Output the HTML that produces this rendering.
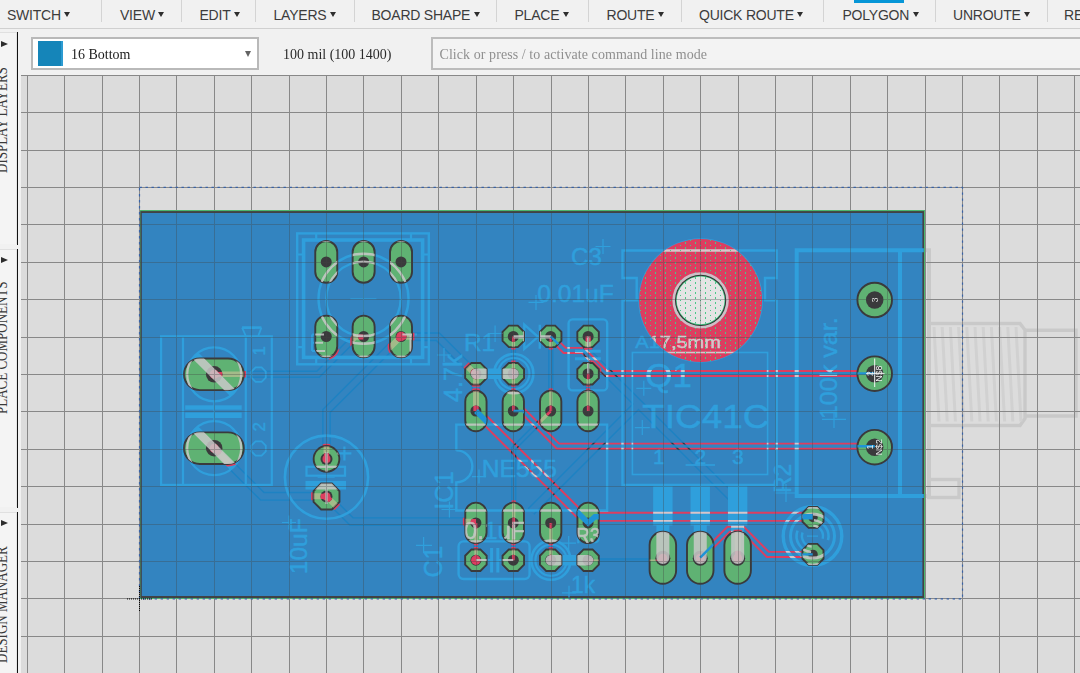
<!DOCTYPE html>
<html><head><meta charset="utf-8"><title>PCB</title>
<style>
html,body{margin:0;padding:0;}
body{width:1080px;height:673px;overflow:hidden;background:#dcdcdc;position:relative;font-family:"Liberation Sans",sans-serif;}
#menubar{position:absolute;left:0;top:0;width:1080px;height:28px;background:#f1f1f1;border-bottom:1px solid #d0d0d0;}
.mi{position:absolute;top:7px;font-size:14px;line-height:16px;color:#3c3c3c;white-space:nowrap;letter-spacing:-0.22px;}
.mi i{display:inline-block;width:0;height:0;border-left:3.6px solid transparent;border-right:3.6px solid transparent;border-top:5.4px solid #2e2e2e;margin-left:3.4px;vertical-align:2.6px;}
.sep{position:absolute;top:0;width:1px;height:22px;background:#d4d4d4;}
#toolbar{position:absolute;left:0;top:29px;width:1080px;height:46px;background:#f1f1f1;}
#sidebar{position:absolute;left:0;top:29px;width:21px;height:644px;background:#f1f1f1;overflow:hidden;}
.vline{position:absolute;left:17px;width:1.2px;background:#111;}
.vt{position:absolute;left:-7px;transform-origin:0 0;transform:rotate(-90deg) scaleY(1.3);font-family:"Liberation Serif",serif;font-size:13px;color:#3a3a3a;white-space:nowrap;line-height:13px;}
.arr{position:absolute;left:0.8px;width:0;height:0;border-top:3.6px solid transparent;border-bottom:3.6px solid transparent;border-left:7px solid #2c2c2c;}
#layerbox{position:absolute;left:31px;top:37px;width:224px;height:29px;background:#fff;border:2px solid #b9b9b9;}
#swatch{position:absolute;left:5px;top:2px;width:24.6px;height:24.6px;background:#1585b9;border-right:2px solid #2c9bd2;box-sizing:border-box;}
#layername{position:absolute;left:38px;top:6.5px;font-family:"Liberation Serif",serif;font-size:14px;line-height:17px;color:#1c1c1c;transform:scaleY(1.1);transform-origin:0 13.5px;}
#ddarr{position:absolute;left:211.5px;top:11.5px;width:0;height:0;border-left:3.8px solid transparent;border-right:3.8px solid transparent;border-top:6px solid #636363;}
#gridtxt{position:absolute;left:283px;top:45.5px;font-family:"Liberation Serif",serif;font-size:14px;line-height:17px;color:#2a2a2a;white-space:nowrap;transform:scaleY(1.1);transform-origin:0 13.5px;}
#cmd{position:absolute;left:431px;top:37px;width:660px;height:29px;background:#f3f3f3;border:2px solid #bcbcbc;}
#cmd span{position:absolute;left:6.5px;top:6.5px;font-family:"Liberation Serif",serif;font-size:14px;line-height:17px;color:#8f8f8f;white-space:nowrap;transform:scaleY(1.1);transform-origin:0 13.5px;letter-spacing:0.07px;}
#canvas{position:absolute;left:21px;top:75px;width:1059px;height:598px;background:#dcdcdc;overflow:hidden;}
svg{position:absolute;left:0;top:0;}
</style></head><body>
<div id="canvas"></div>
<svg width="1080" height="673" viewBox="0 0 1080 673">
<defs>
<clipPath id="cv"><rect x="21" y="75" width="1059" height="598"/></clipPath>
<g id="silk" fill="none" stroke="currentColor" font-family="Liberation Sans, sans-serif"><rect x="297.2" y="233.4" width="131.60000000000002" height="130.9" rx="0" stroke-width="2.4"/><rect x="303.6" y="240" width="119.0" height="117.39999999999998" rx="0" stroke-width="3.6"/><path d="M316.2 233.4V240M411 233.4V240M316.2 357.4V364.3M411 357.4V364.3M297.2 254.5H303.6M422.6 254.5H428.8M297.2 347.2H303.6M422.6 347.2H428.8" stroke-width="2.2" /><circle cx="363.5" cy="298.8" r="45" stroke-width="2.4"/><circle cx="363.5" cy="298.8" r="37.2" stroke-width="2.4"/><path d="M350.4 298.8H376.4M363.5 285.4V312" stroke-width="1" /><path d="M312 334.6V351M312 334.6H324M312 342.7H323M312 351H325" stroke-width="2" /><path d="M402.4 334.6H417M410.5 334.6V351.7" stroke-width="2" /><rect x="161.1" y="336.3" width="110.70000000000002" height="148.59999999999997" rx="0" stroke-width="2.2"/><path d="M183 336.3V484.9M245.8 336.3V484.9" stroke-width="2.2" /><path d="M242.1 327.6H261.4" stroke-width="2.6" /><path d="M242.1 327.6L245.8 336M261.4 327.6L258.2 336" stroke-width="1.8" /><circle cx="214.2" cy="374.3" r="27" stroke-width="2.2"/><path d="M195.1 355.2L233.3 393.4" stroke-width="8.4"/><path d="M255.6 367.4 L261.6 367.4 L265.8 371.6 L265.8 377.6 L261.6 381.8 L255.6 381.8 L251.4 377.6 L251.4 371.6Z" stroke-width="1.8" /><circle cx="214.2" cy="448.2" r="27" stroke-width="2.2"/><path d="M195.1 429.1L233.3 467.3" stroke-width="8.4"/><path d="M255.6 441.3 L261.6 441.3 L265.8 445.5 L265.8 451.5 L261.6 455.7 L255.6 455.7 L251.4 451.5 L251.4 445.5Z" stroke-width="1.8" /><rect x="185.2" y="405.3" width="56.5" height="4.399999999999977" fill="currentColor" stroke="none"/><rect x="185.2" y="412.5" width="56.5" height="5.5" fill="currentColor" stroke="none"/><path d="M214.2 401.3V421.2" stroke-width="1.6" /><text x="0" y="0" font-size="17" text-anchor="start" fill="currentColor" stroke="currentColor" stroke-width="0.5" transform="translate(264.5 355.5) rotate(-90)">1</text><text x="0" y="0" font-size="17" text-anchor="start" fill="currentColor" stroke="currentColor" stroke-width="0.5" transform="translate(264.5 431.5) rotate(-90)">2</text><circle cx="326.5" cy="477.2" r="41.6" stroke-width="2.6"/><rect x="306.5" y="466.8" width="38.5" height="8.899999999999977" rx="0" stroke-width="2.2"/><rect x="305.5" y="480.9" width="40.5" height="8.600000000000023" fill="currentColor" stroke="none"/><path d="M326.5 452V472.7M326.5 483V504" stroke-width="2.2" /><path d="M317.6 477.2H334.7" stroke-width="1" /><path d="M337.4 453.4H351.4M344.4 446.4V460.4" stroke-width="2.2" /><text x="0" y="0" font-size="24" text-anchor="start" fill="currentColor" stroke="currentColor" stroke-width="0.5" transform="translate(306.5 574) rotate(-90) scale(1.0165 1)">10uF</text><path d="M282 522.5H296M289 515.5V529.5" stroke-width="1.2" /><path d="M456.3 450.4V424.6H607.1V510.5H456.3V482.4A16 16 0 0 0 456.3 450.4" stroke-width="2.4" /><text x="0" y="0" font-size="23.3" text-anchor="start" fill="currentColor" stroke="currentColor" stroke-width="0.5" transform="translate(481.8 476.6) scale(1.0556 1)">NE555</text><text x="0" y="0" font-size="25" text-anchor="start" fill="currentColor" stroke="currentColor" stroke-width="0.5" transform="translate(452.8 509.5) rotate(-90) scale(0.9845 1)">IC1</text><path d="M472 476.6H486M479 469.6V483.6" stroke-width="1.2" /><path d="M441.5 509.5H457.5M449.4 501.5V517.5" stroke-width="1.2" /><circle cx="513.8" cy="373.6" r="19.6" stroke-width="2.6"/><circle cx="513.8" cy="373.6" r="15.6" stroke-width="2.2"/><path d="M476 373.7H513.6" stroke-width="10.4" stroke-linecap="round"/><text x="0" y="0" font-size="23" text-anchor="start" fill="currentColor" stroke="currentColor" stroke-width="0.5" transform="translate(463.9 350.9) scale(1.0612 1)">R1</text><text x="0" y="0" font-size="25" text-anchor="start" fill="currentColor" stroke="currentColor" stroke-width="0.5" transform="translate(462 402) rotate(-90) scale(1.0053 1)">4.7k</text><path d="M487.7 333.5H502.5M495.1 325.6V342" stroke-width="1.2" /><path d="M437 355H451M444 348V362" stroke-width="1.2" /><path d="M513.4 336.8H524.3M551 336.8H539.8" stroke-width="3.2"/><path d="M524.3 324.7V348.8L538 336.8ZM539.8 324.7V348.8" stroke-width="2.4" /><rect x="568.6" y="319.4" width="38.60000000000002" height="71.0" rx="4" stroke-width="2.4"/><path d="M575 351.2H600.8M575 358.7H600.8" stroke-width="3" /><path d="M588.2 336.5V351.2M588.2 358.7V373.5" stroke-width="2.2" /><text x="0" y="0" font-size="23.3" text-anchor="start" fill="currentColor" stroke="currentColor" stroke-width="0.5" transform="translate(571.1 265.3) scale(1.0308 1)">C3</text><text x="0" y="0" font-size="23.3" text-anchor="start" fill="currentColor" stroke="currentColor" stroke-width="0.5" transform="translate(537.3 302.4) scale(1.0547 1)">0.01uF</text><path d="M595.5 246.5H610.5M603 239V254" stroke-width="1.2" /><path d="M528.5 302.4H543.5M536 295V310" stroke-width="1.2" /><rect x="458.6" y="541.4" width="71.0" height="37.60000000000002" rx="5" stroke-width="2.4"/><path d="M491.6 548V572.6M497.8 548V572.6" stroke-width="3" /><path d="M476 560H491.6M497.8 560H513.4" stroke-width="2" /><text x="0" y="0" font-size="26" text-anchor="start" fill="currentColor" stroke="currentColor" stroke-width="0.5" transform="translate(442 577.4) rotate(-90) scale(0.9478 1)">C1</text><text x="0" y="0" font-size="24" text-anchor="start" fill="currentColor" stroke="currentColor" stroke-width="0.5" transform="translate(463.7 538.9) scale(1.0103 1)">0.1uF</text><path d="M416 545.4H432M423.6 537V553" stroke-width="1.2" /><circle cx="551" cy="560.2" r="19.6" stroke-width="2.6"/><circle cx="551" cy="560.2" r="15.6" stroke-width="2.2"/><path d="M550.8 560.2H588.2" stroke-width="10.4" stroke-linecap="round"/><text x="0" y="0" font-size="21.5" text-anchor="start" fill="currentColor" stroke="currentColor" stroke-width="0.5" transform="translate(576.1 543.1) scale(0.8769 1)">R3</text><text x="0" y="0" font-size="23" text-anchor="start" fill="currentColor" stroke="currentColor" stroke-width="0.5" transform="translate(571 592.8) scale(0.9881 1)">1k</text><path d="M562 592.8H576M569 585.8V599" stroke-width="1.2" /><path d="M561.5 543.1H576M568.7 536V550.5" stroke-width="1.2" /><path d="M622.5 485V300.4H636.7V278H622.5V250.5H776.7V278H765V300.4H776.7V485Z" stroke-width="2.4" /><rect x="632.4" y="352.5" width="135.20000000000005" height="122.0" rx="0" stroke-width="1.6"/><text x="0" y="0" font-size="33.5" text-anchor="start" fill="currentColor" stroke="currentColor" stroke-width="0.5" transform="translate(645.3 387) scale(1.0406 1)">Q1</text><text x="0" y="0" font-size="33.8" text-anchor="start" fill="currentColor" stroke="currentColor" stroke-width="0.5" transform="translate(642.3 427.7) scale(1.0906 1)">TIC41C</text><text x="0" y="0" font-size="21" text-anchor="middle" fill="currentColor" stroke="currentColor" stroke-width="0.5" transform="translate(658.8 463.7)">1</text><text x="0" y="0" font-size="21" text-anchor="middle" fill="currentColor" stroke="currentColor" stroke-width="0.5" transform="translate(700.4 463.7)">2</text><text x="0" y="0" font-size="21" text-anchor="middle" fill="currentColor" stroke="currentColor" stroke-width="0.5" transform="translate(737.8 463.7)">3</text><path d="M685.6 465H715" stroke-width="1.6" /><text x="0" y="0" font-size="17" text-anchor="start" fill="currentColor" stroke="currentColor" stroke-width="0.5" transform="translate(635.3 348) scale(1.1781 1)">A17,5mm</text><path d="M636.3 388.3H651.3M643.8 380.8V395.8" stroke-width="1.2" /><path d="M634.8 427.6H649.8M642.3 420V435" stroke-width="1.2" /><rect x="653.16" y="485" width="19.40000000000009" height="40.5" fill="currentColor" stroke="none"/><path d="M662.86 525V557.5" stroke-width="13" stroke-linecap="round"/><rect x="690.55" y="485" width="19.40000000000009" height="40.5" fill="currentColor" stroke="none"/><path d="M700.25 525V557.5" stroke-width="13" stroke-linecap="round"/><rect x="727.9399999999999" y="485" width="19.40000000000009" height="40.5" fill="currentColor" stroke="none"/><path d="M737.64 525V557.5" stroke-width="13" stroke-linecap="round"/><path d="M930 250.3H796.7V496H930" stroke-width="4" /><path d="M900 250.3V496" stroke-width="4" /><text x="0" y="0" font-size="24.5" text-anchor="start" fill="currentColor" stroke="currentColor" stroke-width="0.5" transform="translate(837 419.3) rotate(-90) scale(1.0260 1)">100k var.</text><text x="0" y="0" font-size="24" text-anchor="start" fill="currentColor" stroke="currentColor" stroke-width="0.5" transform="translate(791.2 493) rotate(-90) scale(0.9551 1)">R2</text><path d="M822 419.3H846M834 410V428" stroke-width="1.2" /><path d="M775 493H797M786 484V502" stroke-width="1.2" /><circle cx="812.5" cy="536.1" r="29.3" stroke-width="3.4"/><circle cx="812.5" cy="536.1" r="22" stroke-width="3"/><path d="M811.1 552.0A16 16 0 0 1 797.5 530.6M813.9 520.2A16 16 0 0 1 828.0 540.2" stroke-width="2.6" /><path d="M811.6 546.6A10.5 10.5 0 0 1 802.6 532.5M813.4 525.6A10.5 10.5 0 0 1 822.6 538.8" stroke-width="2.4" /><path d="M807 536.1H818" stroke-width="1.2" /></g>
<clipPath id="boardclip"><rect x="140.9" y="212.0" width="782.9" height="385.6"/></clipPath>
<pattern id="dots" width="10" height="5" patternUnits="userSpaceOnUse"><rect x="5" y="2" width="1" height="2" fill="#45c98a"/><rect x="0" y="0" width="1" height="1" fill="#45c98a"/></pattern>
<mask id="redmask" maskUnits="userSpaceOnUse" x="0" y="0" width="1080" height="673"><path d="M476 411L588.2 522.9L594.9 516.8H813" stroke="#fff" stroke-width="10.10" fill="none" stroke-linejoin="miter" /><path d="M513.4 411H523L557.9 446.2H874.8" stroke="#fff" stroke-width="7.10" fill="none" stroke-linejoin="miter" /><path d="M550.6 336.4L564.6 350.4H583L606 373.5H874.8" stroke="#fff" stroke-width="7.00" fill="none" stroke-linejoin="miter" /><path d="M813 554.4H767.8L742.7 529.3H728.5L700.2 557.6" stroke="#fff" stroke-width="7.00" fill="none" stroke-linejoin="miter" /><path d="M476 411L588.2 522.9L594.9 516.8H813" stroke="#000" stroke-width="6.20" fill="none" stroke-linejoin="miter" /><path d="M513.4 411H523L557.9 446.2H874.8" stroke="#000" stroke-width="3.20" fill="none" stroke-linejoin="miter" /><path d="M550.6 336.4L564.6 350.4H583L606 373.5H874.8" stroke="#000" stroke-width="3.10" fill="none" stroke-linejoin="miter" /><path d="M813 554.4H767.8L742.7 529.3H728.5L700.2 557.6" stroke="#000" stroke-width="3.10" fill="none" stroke-linejoin="miter" /><circle cx="700.6" cy="300.4" r="61.5" fill="#fff"/></mask>
<clipPath id="padclip"><rect x="315.25" y="241.05" width="22" height="41.7" rx="11.0" ry="11.0"/><rect x="315.25" y="315.65" width="22" height="41.7" rx="11.0" ry="11.0"/><rect x="352.64" y="241.05" width="22" height="41.7" rx="11.0" ry="11.0"/><rect x="352.64" y="315.65" width="22" height="41.7" rx="11.0" ry="11.0"/><rect x="390.03" y="241.05" width="22" height="41.7" rx="11.0" ry="11.0"/><rect x="390.03" y="315.65" width="22" height="41.7" rx="11.0" ry="11.0"/><rect x="184.05" y="358.45" width="59.7" height="31.7" rx="15.85" ry="15.85"/><rect x="184.05" y="432.35" width="59.7" height="31.7" rx="15.85" ry="15.85"/><circle cx="326.5" cy="458.9" r="12.85"/><polygon points="321.14,483.55 331.86,483.55 339.45,491.14 339.45,501.86 331.86,509.45 321.14,509.45 313.55,501.86 313.55,491.14"/><rect x="465.26" y="390.75" width="21.3" height="40.5" rx="10.65" ry="10.65"/><rect x="465.26" y="502.65" width="21.3" height="40.5" rx="10.65" ry="10.65"/><rect x="502.65" y="390.75" width="21.3" height="40.5" rx="10.65" ry="10.65"/><rect x="502.65" y="502.65" width="21.3" height="40.5" rx="10.65" ry="10.65"/><rect x="540.04" y="390.75" width="21.3" height="40.5" rx="10.65" ry="10.65"/><rect x="540.04" y="502.65" width="21.3" height="40.5" rx="10.65" ry="10.65"/><rect x="577.43" y="390.75" width="21.3" height="40.5" rx="10.65" ry="10.65"/><rect x="577.43" y="502.65" width="21.3" height="40.5" rx="10.65" ry="10.65"/><polygon points="471.46,362.95 480.36,362.95 486.66,369.25 486.66,378.15 480.36,384.45 471.46,384.45 465.16,378.15 465.16,369.25"/><polygon points="508.85,362.95 517.75,362.95 524.05,369.25 524.05,378.15 517.75,384.45 508.85,384.45 502.55,378.15 502.55,369.25"/><polygon points="508.85,325.65 517.75,325.65 524.05,331.95 524.05,340.85 517.75,347.15 508.85,347.15 502.55,340.85 502.55,331.95"/><polygon points="546.24,325.65 555.14,325.65 561.44,331.95 561.44,340.85 555.14,347.15 546.24,347.15 539.94,340.85 539.94,331.95"/><polygon points="583.63,325.65 592.53,325.65 598.83,331.95 598.83,340.85 592.53,347.15 583.63,347.15 577.33,340.85 577.33,331.95"/><polygon points="583.63,362.95 592.53,362.95 598.83,369.25 598.83,378.15 592.53,384.45 583.63,384.45 577.33,378.15 577.33,369.25"/><polygon points="471.46,549.45 480.36,549.45 486.66,555.75 486.66,564.65 480.36,570.95 471.46,570.95 465.16,564.65 465.16,555.75"/><polygon points="508.85,549.45 517.75,549.45 524.05,555.75 524.05,564.65 517.75,570.95 508.85,570.95 502.55,564.65 502.55,555.75"/><polygon points="546.24,549.45 555.14,549.45 561.44,555.75 561.44,564.65 555.14,570.95 546.24,570.95 539.94,564.65 539.94,555.75"/><polygon points="583.63,549.45 592.53,549.45 598.83,555.75 598.83,564.65 592.53,570.95 583.63,570.95 577.33,564.65 577.33,555.75"/><rect x="649.61" y="531.80" width="26.5" height="52" rx="13.25" ry="13.25"/><rect x="687.00" y="531.80" width="26.5" height="52" rx="13.25" ry="13.25"/><rect x="724.39" y="531.80" width="26.5" height="52" rx="13.25" ry="13.25"/><circle cx="874.7" cy="300" r="17.3"/><circle cx="874.7" cy="373.7" r="17.3"/><circle cx="874.7" cy="447.2" r="17.3"/><polygon points="808.65,506.90 817.35,506.90 823.50,513.05 823.50,521.75 817.35,527.90 808.65,527.90 802.50,521.75 802.50,513.05"/><polygon points="808.65,543.90 817.35,543.90 823.50,550.05 823.50,558.75 817.35,564.90 808.65,564.90 802.50,558.75 802.50,550.05"/></clipPath>
<clipPath id="padbig"><rect x="312.85" y="238.65" width="26.8" height="46.5" rx="13.4" ry="13.4"/><rect x="312.85" y="313.25" width="26.8" height="46.5" rx="13.4" ry="13.4"/><rect x="350.24" y="238.65" width="26.8" height="46.5" rx="13.4" ry="13.4"/><rect x="350.24" y="313.25" width="26.8" height="46.5" rx="13.4" ry="13.4"/><rect x="387.63" y="238.65" width="26.8" height="46.5" rx="13.4" ry="13.4"/><rect x="387.63" y="313.25" width="26.8" height="46.5" rx="13.4" ry="13.4"/><rect x="181.65" y="356.05" width="64.5" height="36.5" rx="18.25" ry="18.25"/><rect x="181.65" y="429.95" width="64.5" height="36.5" rx="18.25" ry="18.25"/><circle cx="326.5" cy="458.9" r="15.25"/><polygon points="320.14,481.15 332.86,481.15 341.85,490.14 341.85,502.86 332.86,511.85 320.14,511.85 311.15,502.86 311.15,490.14"/><rect x="462.86" y="388.35" width="26.1" height="45.3" rx="13.05" ry="13.05"/><rect x="462.86" y="500.25" width="26.1" height="45.3" rx="13.05" ry="13.05"/><rect x="500.25" y="388.35" width="26.1" height="45.3" rx="13.05" ry="13.05"/><rect x="500.25" y="500.25" width="26.1" height="45.3" rx="13.05" ry="13.05"/><rect x="537.64" y="388.35" width="26.1" height="45.3" rx="13.05" ry="13.05"/><rect x="537.64" y="500.25" width="26.1" height="45.3" rx="13.05" ry="13.05"/><rect x="575.03" y="388.35" width="26.1" height="45.3" rx="13.05" ry="13.05"/><rect x="575.03" y="500.25" width="26.1" height="45.3" rx="13.05" ry="13.05"/><polygon points="470.46,360.55 481.36,360.55 489.06,368.25 489.06,379.15 481.36,386.85 470.46,386.85 462.76,379.15 462.76,368.25"/><polygon points="507.85,360.55 518.75,360.55 526.45,368.25 526.45,379.15 518.75,386.85 507.85,386.85 500.15,379.15 500.15,368.25"/><polygon points="507.85,323.25 518.75,323.25 526.45,330.95 526.45,341.85 518.75,349.55 507.85,349.55 500.15,341.85 500.15,330.95"/><polygon points="545.24,323.25 556.14,323.25 563.84,330.95 563.84,341.85 556.14,349.55 545.24,349.55 537.54,341.85 537.54,330.95"/><polygon points="582.63,323.25 593.53,323.25 601.23,330.95 601.23,341.85 593.53,349.55 582.63,349.55 574.93,341.85 574.93,330.95"/><polygon points="582.63,360.55 593.53,360.55 601.23,368.25 601.23,379.15 593.53,386.85 582.63,386.85 574.93,379.15 574.93,368.25"/><polygon points="470.46,547.05 481.36,547.05 489.06,554.75 489.06,565.65 481.36,573.35 470.46,573.35 462.76,565.65 462.76,554.75"/><polygon points="507.85,547.05 518.75,547.05 526.45,554.75 526.45,565.65 518.75,573.35 507.85,573.35 500.15,565.65 500.15,554.75"/><polygon points="545.24,547.05 556.14,547.05 563.84,554.75 563.84,565.65 556.14,573.35 545.24,573.35 537.54,565.65 537.54,554.75"/><polygon points="582.63,547.05 593.53,547.05 601.23,554.75 601.23,565.65 593.53,573.35 582.63,573.35 574.93,565.65 574.93,554.75"/><rect x="647.21" y="529.40" width="31.3" height="56.8" rx="15.65" ry="15.65"/><rect x="684.60" y="529.40" width="31.3" height="56.8" rx="15.65" ry="15.65"/><rect x="721.99" y="529.40" width="31.3" height="56.8" rx="15.65" ry="15.65"/><circle cx="874.7" cy="300" r="19.7"/><circle cx="874.7" cy="373.7" r="19.7"/><circle cx="874.7" cy="447.2" r="19.7"/><polygon points="807.66,504.50 818.34,504.50 825.90,512.06 825.90,522.74 818.34,530.30 807.66,530.30 800.10,522.74 800.10,512.06"/><polygon points="807.66,541.50 818.34,541.50 825.90,549.06 825.90,559.74 818.34,567.30 807.66,567.30 800.10,559.74 800.10,549.06"/></clipPath>
<clipPath id="holeclip"><circle cx="326.25" cy="261.90000000000003" r="5.5"/><circle cx="326.25" cy="336.5" r="5.5"/><circle cx="363.64" cy="261.90000000000003" r="5.5"/><circle cx="363.64" cy="336.5" r="5.5"/><circle cx="401.03" cy="261.90000000000003" r="5.5"/><circle cx="401.03" cy="336.5" r="5.5"/><circle cx="214.2" cy="374.3" r="8.25"/><circle cx="214.2" cy="448.2" r="8.25"/><circle cx="326.5" cy="458.9" r="6.0"/><circle cx="326.5" cy="496.5" r="6.0"/><circle cx="475.91" cy="411.0" r="5.5"/><circle cx="475.91" cy="522.9" r="5.5"/><circle cx="513.3" cy="411.0" r="5.5"/><circle cx="513.3" cy="522.9" r="5.5"/><circle cx="550.69" cy="411.0" r="5.5"/><circle cx="550.69" cy="522.9" r="5.5"/><circle cx="588.08" cy="411.0" r="5.5"/><circle cx="588.08" cy="522.9" r="5.5"/><circle cx="475.91" cy="373.7" r="5.5"/><circle cx="513.3" cy="373.7" r="5.5"/><circle cx="513.3" cy="336.4" r="5.5"/><circle cx="550.69" cy="336.4" r="5.5"/><circle cx="588.08" cy="336.4" r="5.5"/><circle cx="588.08" cy="373.7" r="5.5"/><circle cx="475.91" cy="560.2" r="5.5"/><circle cx="513.3" cy="560.2" r="5.5"/><circle cx="550.69" cy="560.2" r="5.5"/><circle cx="588.08" cy="560.2" r="5.5"/><circle cx="662.86" cy="558.3" r="7.5"/><circle cx="700.25" cy="558.3" r="7.5"/><circle cx="737.64" cy="558.3" r="7.5"/><circle cx="874.7" cy="300" r="8.75"/><circle cx="874.7" cy="373.7" r="8.75"/><circle cx="874.7" cy="447.2" r="8.75"/><circle cx="813" cy="517.4" r="4.75"/><circle cx="813" cy="554.4" r="4.75"/></clipPath>
<clipPath id="outb"><path clip-rule="evenodd" d="M0 0H1080V673H0ZM140 210H925V599H140Z"/></clipPath>
<clipPath id="inb"><rect x="140" y="211" width="784.4" height="387"/></clipPath>
</defs>
<g clip-path="url(#cv)">
<g id="outsilk" fill="none" stroke="#c9c9c9" stroke-width="3.4"><path d="M920 250.3H929V496H920" stroke-width="4"/><path d="M930 323.5H1020L1025 330V418.5L1020 425.5H930"/><path d="M1025 330.3H1076V416H1025"/><path d="M927 479.5H959V497.5H927" /><path d="M934.0 327L939.0 421.5M942.2 327L947.2 421.5M950.4 327L955.4 421.5M958.6 327L963.6 421.5M966.8 327L971.8 421.5M975.0 327L980.0 421.5M983.2 327L988.2 421.5M991.4 327L996.4 421.5M999.6 327L1004.6 421.5M1007.8 327L1012.8 421.5M1016.0 327L1021.0 421.5" stroke-width="3" stroke="#d1d1d1"/></g>
<rect x="139.6" y="210" width="785.4" height="389" fill="#4cb56e"/>
<rect x="140.4" y="211.1" width="783.6" height="386.9" fill="#414244"/>
<rect x="141.8" y="213" width="780.6" height="383" fill="#3384c0"/>
<path d="M476 411L588.2 522.9L594.9 516.8H813" stroke="#dc3e60" stroke-width="10.10" fill="none" stroke-linejoin="miter" /><path d="M513.4 411H523L557.9 446.2H874.8" stroke="#dc3e60" stroke-width="7.10" fill="none" stroke-linejoin="miter" /><path d="M550.6 336.4L564.6 350.4H583L606 373.5H874.8" stroke="#dc3e60" stroke-width="7.00" fill="none" stroke-linejoin="miter" /><path d="M813 554.4H767.8L742.7 529.3H728.5L700.2 557.6" stroke="#dc3e60" stroke-width="7.00" fill="none" stroke-linejoin="miter" />
<path d="M476 411L588.2 522.9L594.9 516.8H813" stroke="#3185c3" stroke-width="6.20" fill="none" stroke-linejoin="miter" /><path d="M513.4 411H523L557.9 446.2H874.8" stroke="#3185c3" stroke-width="3.20" fill="none" stroke-linejoin="miter" /><path d="M550.6 336.4L564.6 350.4H583L606 373.5H874.8" stroke="#3185c3" stroke-width="3.10" fill="none" stroke-linejoin="miter" /><path d="M813 554.4H767.8L742.7 529.3H728.5L700.2 557.6" stroke="#3185c3" stroke-width="3.10" fill="none" stroke-linejoin="miter" />
<path d="M214.2 374.3H318L355.3 337H363.5" stroke="#1d82c3" stroke-width="7.50" fill="none" stroke-linejoin="miter" /><path d="M214.2 448.2L262.3 496.3H326.5" stroke="#1d82c3" stroke-width="9.10" fill="none" stroke-linejoin="miter" /><path d="M326.5 496.5L351.6 521.6H476" stroke="#1d82c3" stroke-width="8.90" fill="none" stroke-linejoin="miter" /><path d="M400.6 336.9L326.5 411V458.9" stroke="#1d82c3" stroke-width="8.70" fill="none" stroke-linejoin="miter" /><path d="M400.6 336.7H437.8L474.8 373.7H476V411" stroke="#1d82c3" stroke-width="8.90" fill="none" stroke-linejoin="miter" /><path d="M550.8 411L513.7 448.4V522.9" stroke="#1d82c3" stroke-width="5.40" fill="none" stroke-linejoin="miter" /><path d="M588.2 336.4V353.6L737.8 503.2V557.6" stroke="#1d82c3" stroke-width="9.40" fill="none" stroke-linejoin="miter" /><path d="M531 511.5L638.5 404" stroke="#1d82c3" stroke-width="9.40" fill="none" stroke-linejoin="miter" /><path d="M588.2 373.7V411" stroke="#1d82c3" stroke-width="5.40" fill="none" stroke-linejoin="miter" /><path d="M513.4 336.4V411" stroke="#1d82c3" stroke-width="5.40" fill="none" stroke-linejoin="miter" /><path d="M476 522.9V560.2" stroke="#1d82c3" stroke-width="5.40" fill="none" stroke-linejoin="miter" /><path d="M513.4 522.9V560.2" stroke="#1d82c3" stroke-width="5.40" fill="none" stroke-linejoin="miter" /><path d="M550.8 522.9V560.2" stroke="#1d82c3" stroke-width="5.40" fill="none" stroke-linejoin="miter" /><path d="M550.8 336.4V411" stroke="#1d82c3" stroke-width="5.40" fill="none" stroke-linejoin="miter" /><path d="M588.2 560.2H663" stroke="#1d82c3" stroke-width="3.70" fill="none" stroke-linejoin="miter" />
<path d="M214.2 374.3H318L355.3 337H363.5" stroke="#3384c0" stroke-width="4.60" fill="none" stroke-linejoin="miter" /><path d="M214.2 448.2L262.3 496.3H326.5" stroke="#3384c0" stroke-width="6.20" fill="none" stroke-linejoin="miter" /><path d="M326.5 496.5L351.6 521.6H476" stroke="#3384c0" stroke-width="6.00" fill="none" stroke-linejoin="miter" /><path d="M400.6 336.9L326.5 411V458.9" stroke="#3384c0" stroke-width="5.80" fill="none" stroke-linejoin="miter" /><path d="M400.6 336.7H437.8L474.8 373.7H476V411" stroke="#3384c0" stroke-width="6.00" fill="none" stroke-linejoin="miter" /><path d="M550.8 411L513.7 448.4V522.9" stroke="#3384c0" stroke-width="2.50" fill="none" stroke-linejoin="miter" /><path d="M588.2 336.4V353.6L737.8 503.2V557.6" stroke="#3384c0" stroke-width="6.50" fill="none" stroke-linejoin="miter" /><path d="M531 511.5L638.5 404" stroke="#3384c0" stroke-width="6.50" fill="none" stroke-linejoin="miter" /><path d="M588.2 373.7V411" stroke="#3384c0" stroke-width="2.50" fill="none" stroke-linejoin="miter" /><path d="M513.4 336.4V411" stroke="#3384c0" stroke-width="2.50" fill="none" stroke-linejoin="miter" /><path d="M476 522.9V560.2" stroke="#3384c0" stroke-width="2.50" fill="none" stroke-linejoin="miter" /><path d="M513.4 522.9V560.2" stroke="#3384c0" stroke-width="2.50" fill="none" stroke-linejoin="miter" /><path d="M550.8 522.9V560.2" stroke="#3384c0" stroke-width="2.50" fill="none" stroke-linejoin="miter" /><path d="M550.8 336.4V411" stroke="#3384c0" stroke-width="2.50" fill="none" stroke-linejoin="miter" /><path d="M588.2 560.2H663" stroke="#3384c0" stroke-width="0.80" fill="none" stroke-linejoin="miter" />
<use href="#silk" style="color:#2f9fdc" clip-path="url(#boardclip)"/>
<circle cx="700.6" cy="300.4" r="62.2" fill="#2f9fdc"/>
<circle cx="700.6" cy="300.4" r="61.5" fill="#dc3e60"/>
<g mask="url(#redmask)"><path d="M214.2 374.3H318L355.3 337H363.5" stroke="#3a3436" stroke-width="7.50" fill="none" stroke-linejoin="miter" /><path d="M214.2 448.2L262.3 496.3H326.5" stroke="#3a3436" stroke-width="9.10" fill="none" stroke-linejoin="miter" /><path d="M326.5 496.5L351.6 521.6H476" stroke="#3a3436" stroke-width="8.90" fill="none" stroke-linejoin="miter" /><path d="M400.6 336.9L326.5 411V458.9" stroke="#3a3436" stroke-width="8.70" fill="none" stroke-linejoin="miter" /><path d="M400.6 336.7H437.8L474.8 373.7H476V411" stroke="#3a3436" stroke-width="8.90" fill="none" stroke-linejoin="miter" /><path d="M550.8 411L513.7 448.4V522.9" stroke="#3a3436" stroke-width="5.40" fill="none" stroke-linejoin="miter" /><path d="M588.2 336.4V353.6L737.8 503.2V557.6" stroke="#3a3436" stroke-width="9.40" fill="none" stroke-linejoin="miter" /><path d="M531 511.5L638.5 404" stroke="#3a3436" stroke-width="9.40" fill="none" stroke-linejoin="miter" /><path d="M588.2 373.7V411" stroke="#3a3436" stroke-width="5.40" fill="none" stroke-linejoin="miter" /><path d="M513.4 336.4V411" stroke="#3a3436" stroke-width="5.40" fill="none" stroke-linejoin="miter" /><path d="M476 522.9V560.2" stroke="#3a3436" stroke-width="5.40" fill="none" stroke-linejoin="miter" /><path d="M513.4 522.9V560.2" stroke="#3a3436" stroke-width="5.40" fill="none" stroke-linejoin="miter" /><path d="M550.8 522.9V560.2" stroke="#3a3436" stroke-width="5.40" fill="none" stroke-linejoin="miter" /><path d="M550.8 336.4V411" stroke="#3a3436" stroke-width="5.40" fill="none" stroke-linejoin="miter" /><path d="M588.2 560.2H663" stroke="#3a3436" stroke-width="3.70" fill="none" stroke-linejoin="miter" /><path d="M214.2 374.3H318L355.3 337H363.5" stroke="#dc3e60" stroke-width="4.50" fill="none" stroke-linejoin="miter" /><path d="M214.2 448.2L262.3 496.3H326.5" stroke="#dc3e60" stroke-width="6.10" fill="none" stroke-linejoin="miter" /><path d="M326.5 496.5L351.6 521.6H476" stroke="#dc3e60" stroke-width="5.90" fill="none" stroke-linejoin="miter" /><path d="M400.6 336.9L326.5 411V458.9" stroke="#dc3e60" stroke-width="5.70" fill="none" stroke-linejoin="miter" /><path d="M400.6 336.7H437.8L474.8 373.7H476V411" stroke="#dc3e60" stroke-width="5.90" fill="none" stroke-linejoin="miter" /><path d="M550.8 411L513.7 448.4V522.9" stroke="#dc3e60" stroke-width="2.40" fill="none" stroke-linejoin="miter" /><path d="M588.2 336.4V353.6L737.8 503.2V557.6" stroke="#dc3e60" stroke-width="6.40" fill="none" stroke-linejoin="miter" /><path d="M531 511.5L638.5 404" stroke="#dc3e60" stroke-width="6.40" fill="none" stroke-linejoin="miter" /><path d="M588.2 373.7V411" stroke="#dc3e60" stroke-width="2.40" fill="none" stroke-linejoin="miter" /><path d="M513.4 336.4V411" stroke="#dc3e60" stroke-width="2.40" fill="none" stroke-linejoin="miter" /><path d="M476 522.9V560.2" stroke="#dc3e60" stroke-width="2.40" fill="none" stroke-linejoin="miter" /><path d="M513.4 522.9V560.2" stroke="#dc3e60" stroke-width="2.40" fill="none" stroke-linejoin="miter" /><path d="M550.8 522.9V560.2" stroke="#dc3e60" stroke-width="2.40" fill="none" stroke-linejoin="miter" /><path d="M550.8 336.4V411" stroke="#dc3e60" stroke-width="2.40" fill="none" stroke-linejoin="miter" /><path d="M588.2 560.2H663" stroke="#dc3e60" stroke-width="0.80" fill="none" stroke-linejoin="miter" /><use href="#silk" style="color:#d8c4ca"/></g>
<circle cx="700.6" cy="300.4" r="61.5" fill="url(#dots)"/>
<circle cx="700.6" cy="300.4" r="28.2" fill="#cdbfc6"/>
<circle cx="700.6" cy="300.4" r="25.6" fill="#303030"/>
<circle cx="700.6" cy="300.4" r="24.6" fill="#3fbf7d"/>
<circle cx="700.6" cy="300.4" r="23.9" fill="#e4e4e4"/>
<circle cx="700.6" cy="300.4" r="23.9" fill="url(#dots)"/>
<g clip-path="url(#padbig)"><path d="M214.2 374.3H318L355.3 337H363.5" stroke="#dc3e60" stroke-width="6.40" fill="none" stroke-linejoin="miter" /><path d="M214.2 448.2L262.3 496.3H326.5" stroke="#dc3e60" stroke-width="8.00" fill="none" stroke-linejoin="miter" /><path d="M326.5 496.5L351.6 521.6H476" stroke="#dc3e60" stroke-width="7.80" fill="none" stroke-linejoin="miter" /><path d="M400.6 336.9L326.5 411V458.9" stroke="#dc3e60" stroke-width="7.60" fill="none" stroke-linejoin="miter" /><path d="M400.6 336.7H437.8L474.8 373.7H476V411" stroke="#dc3e60" stroke-width="7.80" fill="none" stroke-linejoin="miter" /><path d="M550.8 411L513.7 448.4V522.9" stroke="#dc3e60" stroke-width="4.30" fill="none" stroke-linejoin="miter" /><path d="M588.2 336.4V353.6L737.8 503.2V557.6" stroke="#dc3e60" stroke-width="8.30" fill="none" stroke-linejoin="miter" /><path d="M588.2 373.7V411" stroke="#dc3e60" stroke-width="4.30" fill="none" stroke-linejoin="miter" /><path d="M513.4 336.4V411" stroke="#dc3e60" stroke-width="4.30" fill="none" stroke-linejoin="miter" /><path d="M476 522.9V560.2" stroke="#dc3e60" stroke-width="4.30" fill="none" stroke-linejoin="miter" /><path d="M513.4 522.9V560.2" stroke="#dc3e60" stroke-width="4.30" fill="none" stroke-linejoin="miter" /><path d="M550.8 522.9V560.2" stroke="#dc3e60" stroke-width="4.30" fill="none" stroke-linejoin="miter" /><path d="M550.8 336.4V411" stroke="#dc3e60" stroke-width="4.30" fill="none" stroke-linejoin="miter" /></g>
<g fill="#5fb273" stroke="#3a3a3c" stroke-width="1.9"><rect x="315.25" y="241.05" width="22" height="41.7" rx="11.0" ry="11.0"/><rect x="315.25" y="315.65" width="22" height="41.7" rx="11.0" ry="11.0"/><rect x="352.64" y="241.05" width="22" height="41.7" rx="11.0" ry="11.0"/><rect x="352.64" y="315.65" width="22" height="41.7" rx="11.0" ry="11.0"/><rect x="390.03" y="241.05" width="22" height="41.7" rx="11.0" ry="11.0"/><rect x="390.03" y="315.65" width="22" height="41.7" rx="11.0" ry="11.0"/><rect x="184.05" y="358.45" width="59.7" height="31.7" rx="15.85" ry="15.85"/><rect x="184.05" y="432.35" width="59.7" height="31.7" rx="15.85" ry="15.85"/><circle cx="326.5" cy="458.9" r="12.85"/><polygon points="321.14,483.55 331.86,483.55 339.45,491.14 339.45,501.86 331.86,509.45 321.14,509.45 313.55,501.86 313.55,491.14"/><rect x="465.26" y="390.75" width="21.3" height="40.5" rx="10.65" ry="10.65"/><rect x="465.26" y="502.65" width="21.3" height="40.5" rx="10.65" ry="10.65"/><rect x="502.65" y="390.75" width="21.3" height="40.5" rx="10.65" ry="10.65"/><rect x="502.65" y="502.65" width="21.3" height="40.5" rx="10.65" ry="10.65"/><rect x="540.04" y="390.75" width="21.3" height="40.5" rx="10.65" ry="10.65"/><rect x="540.04" y="502.65" width="21.3" height="40.5" rx="10.65" ry="10.65"/><rect x="577.43" y="390.75" width="21.3" height="40.5" rx="10.65" ry="10.65"/><rect x="577.43" y="502.65" width="21.3" height="40.5" rx="10.65" ry="10.65"/><polygon points="471.46,362.95 480.36,362.95 486.66,369.25 486.66,378.15 480.36,384.45 471.46,384.45 465.16,378.15 465.16,369.25"/><polygon points="508.85,362.95 517.75,362.95 524.05,369.25 524.05,378.15 517.75,384.45 508.85,384.45 502.55,378.15 502.55,369.25"/><polygon points="508.85,325.65 517.75,325.65 524.05,331.95 524.05,340.85 517.75,347.15 508.85,347.15 502.55,340.85 502.55,331.95"/><polygon points="546.24,325.65 555.14,325.65 561.44,331.95 561.44,340.85 555.14,347.15 546.24,347.15 539.94,340.85 539.94,331.95"/><polygon points="583.63,325.65 592.53,325.65 598.83,331.95 598.83,340.85 592.53,347.15 583.63,347.15 577.33,340.85 577.33,331.95"/><polygon points="583.63,362.95 592.53,362.95 598.83,369.25 598.83,378.15 592.53,384.45 583.63,384.45 577.33,378.15 577.33,369.25"/><polygon points="471.46,549.45 480.36,549.45 486.66,555.75 486.66,564.65 480.36,570.95 471.46,570.95 465.16,564.65 465.16,555.75"/><polygon points="508.85,549.45 517.75,549.45 524.05,555.75 524.05,564.65 517.75,570.95 508.85,570.95 502.55,564.65 502.55,555.75"/><polygon points="546.24,549.45 555.14,549.45 561.44,555.75 561.44,564.65 555.14,570.95 546.24,570.95 539.94,564.65 539.94,555.75"/><polygon points="583.63,549.45 592.53,549.45 598.83,555.75 598.83,564.65 592.53,570.95 583.63,570.95 577.33,564.65 577.33,555.75"/><rect x="649.61" y="531.80" width="26.5" height="52" rx="13.25" ry="13.25"/><rect x="687.00" y="531.80" width="26.5" height="52" rx="13.25" ry="13.25"/><rect x="724.39" y="531.80" width="26.5" height="52" rx="13.25" ry="13.25"/><circle cx="874.7" cy="300" r="17.3"/><circle cx="874.7" cy="373.7" r="17.3"/><circle cx="874.7" cy="447.2" r="17.3"/><polygon points="808.65,506.90 817.35,506.90 823.50,513.05 823.50,521.75 817.35,527.90 808.65,527.90 802.50,521.75 802.50,513.05"/><polygon points="808.65,543.90 817.35,543.90 823.50,550.05 823.50,558.75 817.35,564.90 808.65,564.90 802.50,558.75 802.50,550.05"/></g>
<g clip-path="url(#padclip)"><path d="M214.2 374.3H318L355.3 337H363.5" stroke="rgba(255,200,170,0.42)" stroke-width="5.40" fill="none"/><path d="M214.2 448.2L262.3 496.3H326.5" stroke="rgba(255,200,170,0.42)" stroke-width="5.90" fill="none"/><path d="M326.5 496.5L351.6 521.6H476" stroke="rgba(255,200,170,0.42)" stroke-width="5.90" fill="none"/><path d="M400.6 336.9L326.5 411V458.9" stroke="rgba(255,200,170,0.42)" stroke-width="5.90" fill="none"/><path d="M400.6 336.7H437.8L474.8 373.7H476V411" stroke="rgba(255,200,170,0.42)" stroke-width="5.90" fill="none"/><path d="M550.8 411L513.7 448.4V522.9" stroke="rgba(255,200,170,0.42)" stroke-width="3.30" fill="none"/><path d="M588.2 336.4V353.6L737.8 503.2V557.6" stroke="rgba(255,200,170,0.42)" stroke-width="5.90" fill="none"/><path d="M531 511.5L638.5 404" stroke="rgba(255,200,170,0.42)" stroke-width="5.90" fill="none"/><path d="M588.2 373.7V411" stroke="rgba(255,200,170,0.42)" stroke-width="3.30" fill="none"/><path d="M513.4 336.4V411" stroke="rgba(255,200,170,0.42)" stroke-width="3.30" fill="none"/><path d="M476 522.9V560.2" stroke="rgba(255,200,170,0.42)" stroke-width="3.30" fill="none"/><path d="M513.4 522.9V560.2" stroke="rgba(255,200,170,0.42)" stroke-width="3.30" fill="none"/><path d="M550.8 522.9V560.2" stroke="rgba(255,200,170,0.42)" stroke-width="3.30" fill="none"/><path d="M550.8 336.4V411" stroke="rgba(255,200,170,0.42)" stroke-width="3.30" fill="none"/><path d="M588.2 560.2H663" stroke="rgba(255,200,170,0.42)" stroke-width="1.60" fill="none"/></g>
<circle cx="326.25" cy="261.90000000000003" r="5.5" fill="#3a3a3c"/><circle cx="326.25" cy="336.5" r="5.5" fill="#3a3a3c"/><circle cx="363.64" cy="261.90000000000003" r="5.5" fill="#3a3a3c"/><circle cx="363.64" cy="336.5" r="5.5" fill="#3a3a3c"/><circle cx="401.03" cy="261.90000000000003" r="5.5" fill="#3a3a3c"/><circle cx="401.03" cy="336.5" r="5.5" fill="#3a3a3c"/><circle cx="401.03" cy="336.5" r="4.75" fill="#dc3e60"/><circle cx="214.2" cy="374.3" r="8.25" fill="#3a3a3c"/><circle cx="214.2" cy="374.3" r="4.5" fill="#dc3e60"/><circle cx="214.2" cy="448.2" r="8.25" fill="#3a3a3c"/><circle cx="214.2" cy="448.2" r="4.5" fill="#dc3e60"/><circle cx="326.5" cy="458.9" r="6.0" fill="#3a3a3c"/><circle cx="326.5" cy="458.9" r="4.0" fill="#dc3e60"/><circle cx="326.5" cy="496.5" r="6.0" fill="#3a3a3c"/><circle cx="326.5" cy="496.5" r="4.0" fill="#dc3e60"/><circle cx="475.91" cy="411.0" r="5.5" fill="#3a3a3c"/><circle cx="475.91" cy="522.9" r="5.5" fill="#3a3a3c"/><circle cx="513.3" cy="411.0" r="5.5" fill="#3a3a3c"/><circle cx="513.3" cy="522.9" r="5.5" fill="#3a3a3c"/><circle cx="550.69" cy="411.0" r="5.5" fill="#3a3a3c"/><circle cx="550.69" cy="522.9" r="5.5" fill="#3a3a3c"/><circle cx="588.08" cy="411.0" r="5.5" fill="#3a3a3c"/><circle cx="588.08" cy="522.9" r="5.5" fill="#3a3a3c"/><circle cx="475.91" cy="373.7" r="5.5" fill="#3a3a3c"/><circle cx="513.3" cy="373.7" r="5.5" fill="#3a3a3c"/><circle cx="513.3" cy="336.4" r="5.5" fill="#3a3a3c"/><circle cx="550.69" cy="336.4" r="5.5" fill="#3a3a3c"/><circle cx="588.08" cy="336.4" r="5.5" fill="#3a3a3c"/><circle cx="588.08" cy="373.7" r="5.5" fill="#3a3a3c"/><circle cx="475.91" cy="560.2" r="5.5" fill="#3a3a3c"/><circle cx="475.91" cy="560.2" r="4.75" fill="#dc3e60"/><circle cx="513.3" cy="560.2" r="5.5" fill="#3a3a3c"/><circle cx="550.69" cy="560.2" r="5.5" fill="#3a3a3c"/><circle cx="588.08" cy="560.2" r="5.5" fill="#3a3a3c"/><circle cx="662.86" cy="558.3" r="7.5" fill="#3a3a3c"/><circle cx="662.86" cy="558.3" r="4.5" fill="#dc3e60"/><circle cx="700.25" cy="558.3" r="7.5" fill="#3a3a3c"/><circle cx="700.25" cy="558.3" r="4.5" fill="#dc3e60"/><circle cx="737.64" cy="558.3" r="7.5" fill="#3a3a3c"/><circle cx="737.64" cy="558.3" r="4.5" fill="#dc3e60"/><circle cx="874.7" cy="300" r="8.75" fill="#3a3a3c"/><circle cx="874.7" cy="373.7" r="8.75" fill="#3a3a3c"/><circle cx="874.7" cy="447.2" r="8.75" fill="#3a3a3c"/><circle cx="813" cy="517.4" r="4.75" fill="#3a3a3c"/><circle cx="813" cy="554.4" r="4.75" fill="#3a3a3c"/>
<g clip-path="url(#holeclip)"><path d="M214.2 374.3H318L355.3 337H363.5" stroke="#dc3e60" stroke-width="4.80" fill="none"/><path d="M214.2 448.2L262.3 496.3H326.5" stroke="#dc3e60" stroke-width="5.30" fill="none"/><path d="M326.5 496.5L351.6 521.6H476" stroke="#dc3e60" stroke-width="5.30" fill="none"/><path d="M400.6 336.9L326.5 411V458.9" stroke="#dc3e60" stroke-width="5.30" fill="none"/><path d="M400.6 336.7H437.8L474.8 373.7H476V411" stroke="#dc3e60" stroke-width="5.30" fill="none"/><path d="M550.8 411L513.7 448.4V522.9" stroke="#dc3e60" stroke-width="2.70" fill="none"/><path d="M588.2 336.4V353.6L737.8 503.2V557.6" stroke="#dc3e60" stroke-width="5.30" fill="none"/><path d="M531 511.5L638.5 404" stroke="#dc3e60" stroke-width="5.30" fill="none"/><path d="M588.2 373.7V411" stroke="#dc3e60" stroke-width="2.70" fill="none"/><path d="M513.4 336.4V411" stroke="#dc3e60" stroke-width="2.70" fill="none"/><path d="M476 522.9V560.2" stroke="#dc3e60" stroke-width="2.70" fill="none"/><path d="M513.4 522.9V560.2" stroke="#dc3e60" stroke-width="2.70" fill="none"/><path d="M550.8 522.9V560.2" stroke="#dc3e60" stroke-width="2.70" fill="none"/><path d="M550.8 336.4V411" stroke="#dc3e60" stroke-width="2.70" fill="none"/><path d="M588.2 560.2H663" stroke="#dc3e60" stroke-width="1.00" fill="none"/></g>
<g clip-path="url(#padclip)" opacity="0.86"><use href="#silk" style="color:#c9c9c9"/></g>
<g clip-path="url(#padclip)"><path d="M476 411L588.2 522.9L594.9 516.8H813" stroke="#1f93d6" stroke-width="5.50" fill="none" stroke-linejoin="miter" /><path d="M513.4 411H523L557.9 446.2H874.8" stroke="#1f93d6" stroke-width="2.50" fill="none" stroke-linejoin="miter" /><path d="M550.6 336.4L564.6 350.4H583L606 373.5H874.8" stroke="#1f93d6" stroke-width="2.40" fill="none" stroke-linejoin="miter" /><path d="M813 554.4H767.8L742.7 529.3H728.5L700.2 557.6" stroke="#1f93d6" stroke-width="2.40" fill="none" stroke-linejoin="miter" /></g>
<text transform="translate(878 300) rotate(-90)" font-size="8.5" text-anchor="middle" fill="#f2f2f2" font-family="Liberation Sans, sans-serif">3</text>
<text transform="translate(872.6 373.7) rotate(-90)" font-size="8.5" text-anchor="middle" fill="#f2f2f2" font-family="Liberation Sans, sans-serif">2</text><text transform="translate(882.4 373.7) rotate(-90)" font-size="8.8" text-anchor="middle" fill="#f2f2f2" font-family="Liberation Sans, sans-serif">N$8</text>
<text transform="translate(872.6 447.2) rotate(-90)" font-size="8.5" text-anchor="middle" fill="#f2f2f2" font-family="Liberation Sans, sans-serif">1</text><text transform="translate(882.4 447.2) rotate(-90)" font-size="8.8" text-anchor="middle" fill="#f2f2f2" font-family="Liberation Sans, sans-serif">N$2</text>
<path d="M866 373.7H884.5M874.7 358.5V387" stroke="#f4f4f4" stroke-width="1" fill="none"/>
<path d="M27.5 75V673 M64.5 75V673 M102.5 75V673 M139.5 75V673 M176.5 75V673 M214.5 75V673 M251.5 75V673 M289.5 75V673 M326.5 75V673 M363.5 75V673 M401.5 75V673 M438.5 75V673 M476.5 75V673 M513.5 75V673 M551.5 75V673 M588.5 75V673 M625.5 75V673 M663.5 75V673 M700.5 75V673 M738.5 75V673 M775.5 75V673 M812.5 75V673 M850.5 75V673 M887.5 75V673 M925.5 75V673 M962.5 75V673 M999.5 75V673 M1037.5 75V673 M1074.5 75V673 M21 711.5H1080 M21 673.5H1080 M21 636.5H1080 M21 598.5H1080 M21 561.5H1080 M21 524.5H1080 M21 486.5H1080 M21 449.5H1080 M21 411.5H1080 M21 374.5H1080 M21 337.5H1080 M21 299.5H1080 M21 262.5H1080 M21 224.5H1080 M21 187.5H1080 M21 150.5H1080 M21 112.5H1080 M21 75.5H1080" stroke="#888" stroke-width="1" fill="none" shape-rendering="crispEdges" clip-path="url(#outb)"/>
<path d="M27.5 75V673 M64.5 75V673 M102.5 75V673 M139.5 75V673 M176.5 75V673 M214.5 75V673 M251.5 75V673 M289.5 75V673 M326.5 75V673 M363.5 75V673 M401.5 75V673 M438.5 75V673 M476.5 75V673 M513.5 75V673 M551.5 75V673 M588.5 75V673 M625.5 75V673 M663.5 75V673 M700.5 75V673 M738.5 75V673 M775.5 75V673 M812.5 75V673 M850.5 75V673 M887.5 75V673 M925.5 75V673 M962.5 75V673 M999.5 75V673 M1037.5 75V673 M1074.5 75V673 M21 711.5H1080 M21 673.5H1080 M21 636.5H1080 M21 598.5H1080 M21 561.5H1080 M21 524.5H1080 M21 486.5H1080 M21 449.5H1080 M21 411.5H1080 M21 374.5H1080 M21 337.5H1080 M21 299.5H1080 M21 262.5H1080 M21 224.5H1080 M21 187.5H1080 M21 150.5H1080 M21 112.5H1080 M21 75.5H1080" stroke="#444" stroke-opacity="0.34" stroke-width="1" fill="none" shape-rendering="crispEdges" clip-path="url(#inb)"/>
<rect x="139.5" y="187.44" width="823.02" height="411.51000000000005" fill="none" stroke="#3862a6" stroke-width="1.2" stroke-dasharray="2.4 3.6" />
<path d="M127.0 598.95H152.0M139.5 585.95V611.95" stroke="#000" stroke-width="1" stroke-dasharray="1 1" fill="none"/>
</g>
</svg>
<div id="menubar">
<div class="mi" style="left:7px">SWITCH<i></i></div>
<div class="mi" style="left:120px">VIEW<i></i></div>
<div class="mi" style="left:199.5px">EDIT<i></i></div>
<div class="mi" style="left:273.5px">LAYERS<i></i></div>
<div class="mi" style="left:371.5px">BOARD SHAPE<i></i></div>
<div class="mi" style="left:514.5px">PLACE<i></i></div>
<div class="mi" style="left:606.5px">ROUTE<i></i></div>
<div class="mi" style="left:699px">QUICK ROUTE<i></i></div>
<div class="mi" style="left:842.5px">POLYGON<i></i></div>
<div class="mi" style="left:953px">UNROUTE<i></i></div>
<div class="mi" style="left:1064px">REROUTE<i></i></div>
<div class="sep" style="left:100.5px"></div>
<div class="sep" style="left:180.5px"></div>
<div class="sep" style="left:254.5px"></div>
<div class="sep" style="left:353.5px"></div>
<div class="sep" style="left:495.5px"></div>
<div class="sep" style="left:588.0px"></div>
<div class="sep" style="left:681.0px"></div>
<div class="sep" style="left:823.0px"></div>
<div class="sep" style="left:934.5px"></div>
<div class="sep" style="left:1047.0px"></div>
<div style="position:absolute;left:854px;top:0;width:50px;height:3px;background:#0696d7"></div>
</div>
<div id="toolbar"></div>
<div id="layerbox"><div id="swatch"></div><div id="layername">16 Bottom</div><div id="ddarr"></div></div>
<div id="gridtxt">100 mil (100 1400)</div>
<div id="cmd"><span>Click or press / to activate command line mode</span></div>
<div id="sidebar">
<div class="vline" style="top:3.3999999999999986px;height:212.2px"></div>
<div class="vline" style="top:220px;height:258.6px"></div>
<div class="vline" style="top:483px;height:161px"></div>
<div style="position:absolute;left:0;top:2.9999999999999987px;width:17px;height:212.2px;border-top:1px solid #e0e0e0;border-right:1px solid #e4e4e4;background:#f4f4f4;box-sizing:border-box"></div>
<div style="position:absolute;left:0;top:219.6px;width:17px;height:258.6px;border-top:1px solid #e0e0e0;border-right:1px solid #e4e4e4;background:#f4f4f4;box-sizing:border-box"></div>
<div style="position:absolute;left:0;top:482.6px;width:17px;height:161px;border-top:1px solid #e0e0e0;border-right:1px solid #e4e4e4;background:#f4f4f4;box-sizing:border-box"></div>
<div class="arr" style="top:11.600000000000003px"></div>
<div class="arr" style="top:228.00000000000003px"></div>
<div class="arr" style="top:491.0px"></div>
<div class="vt" style="top:143.8px">DISPLAY LAYERS</div>
<div class="vt" style="top:385.2px">PLACE COMPONENTS</div>
<div class="vt" style="top:634.4px">DESIGN MANAGER</div>
</div>
</body></html>
